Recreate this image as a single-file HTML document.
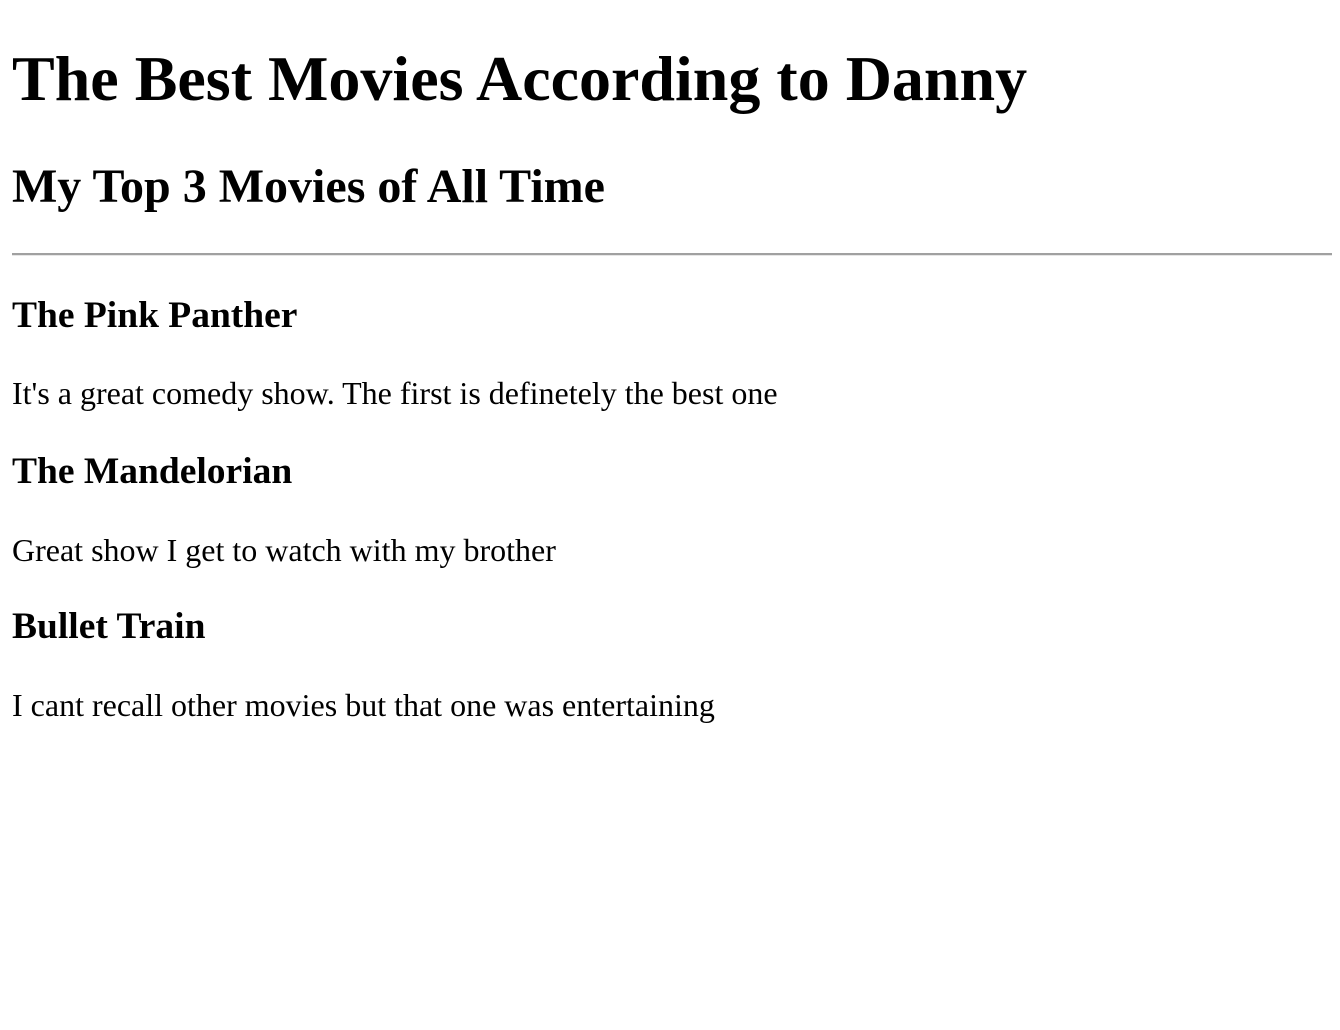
<!DOCTYPE html>
<html><head><meta charset="utf-8"><style>
html,body{margin:0;padding:0;background:#fff;width:1340px;height:1030px;overflow:hidden}
body{position:relative;font-family:"Liberation Serif",serif;color:#000}
.t{position:absolute;left:12px;margin:0;line-height:1;white-space:nowrap}
.h1{font-size:64px;font-weight:bold}
.h2{font-size:48px;font-weight:bold}
.h3{font-size:37.5px;font-weight:bold}
.p{font-size:32px}
hr{position:absolute;left:12px;top:253px;width:1320px;margin:0;border:0;border-top:2px solid #a0a0a0;border-bottom:1px solid #e6e6e6;height:0}
</style></head><body>
<div class="t h1" style="top:47px">The Best Movies According to Danny</div>
<div class="t h2" style="top:163px">My Top 3 Movies of All Time</div>
<hr>
<div class="t h3" style="top:297px">The Pink Panther</div>
<div class="t p" style="top:377px">It's a great comedy show. The first is definetely the best one</div>
<div class="t h3" style="top:453px">The Mandelorian</div>
<div class="t p" style="top:534px">Great show I get to watch with my brother</div>
<div class="t h3" style="top:608px">Bullet Train</div>
<div class="t p" style="top:689px">I cant recall other movies but that one was entertaining</div>
</body></html>
